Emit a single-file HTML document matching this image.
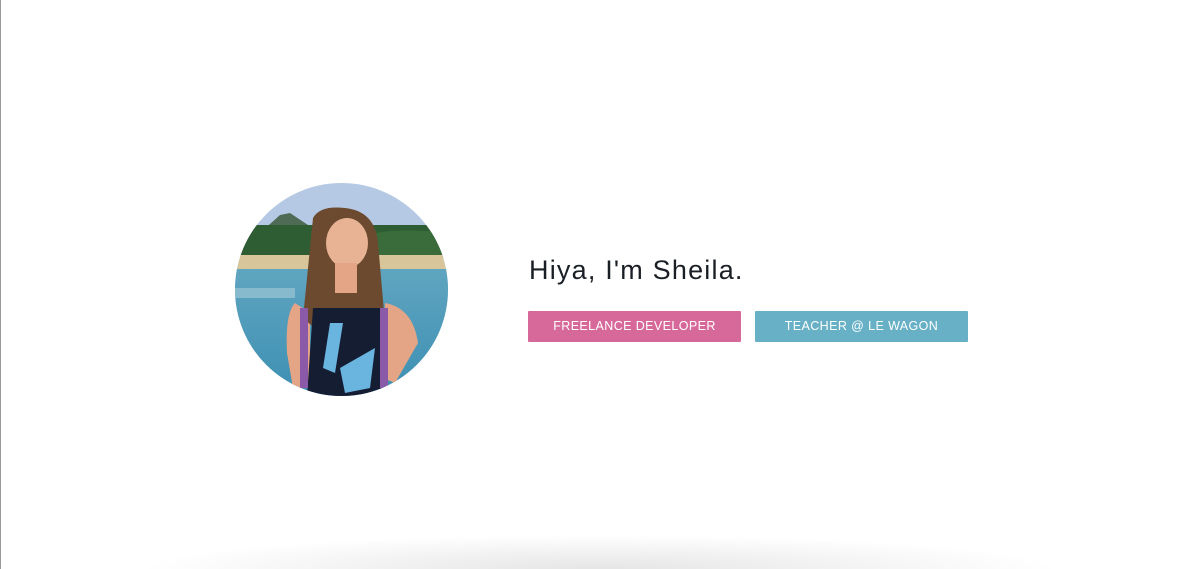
<!DOCTYPE html>
<html><head><style>
html,body{margin:0;padding:0;background:#fff;width:1200px;height:569px;overflow:hidden;position:relative;font-family:"Liberation Sans",sans-serif}
.lb{position:absolute;left:0;top:0;width:1px;height:569px;background:#999}
.shadow{position:absolute;left:140px;top:535px;width:920px;height:34px;background:radial-gradient(ellipse 50% 100% at 50% 100%,rgba(0,0,0,0.10),rgba(0,0,0,0) 100%)}
.photo{position:absolute;left:235px;top:183px;width:213px;height:213px}
h1{position:absolute;left:529px;top:255px;margin:0;font-weight:normal;font-size:27px;color:#1a1f26;letter-spacing:1.2px;white-space:nowrap}
.btn{position:absolute;top:311px;height:31px;width:213px;color:#fff;font-size:12.5px;letter-spacing:0.4px;line-height:31px;text-align:center;border-radius:1px}
</style></head><body>
<div class="lb"></div>
<div class="shadow"></div>
<svg class="photo" viewBox="0 0 213 213">
<defs><clipPath id="c"><circle cx="106.5" cy="106.5" r="106.5"/></clipPath>
<linearGradient id="w" x1="0" y1="0" x2="0" y2="1"><stop offset="0" stop-color="#5fa5c0"/><stop offset="1" stop-color="#3d8fb3"/></linearGradient></defs>
<g clip-path="url(#c)">
<rect width="213" height="213" fill="#b6c9e4"/>
<path d="M25 50 L45 32 L55 30 L70 40 L85 50 Z" fill="#4f6a55"/>
<rect x="0" y="42" width="213" height="33" fill="#2f5d33"/>
<path d="M140 50 Q170 45 213 50 L213 75 L140 75Z" fill="#3a6b3a"/>
<rect x="0" y="72" width="213" height="16" fill="#d9c59a"/>
<rect x="0" y="86" width="213" height="127" fill="url(#w)"/>
<rect x="0" y="105" width="60" height="10" fill="#a9cbd8" opacity="0.6"/>
<path d="M60 120 Q50 130 52 170 L58 205 L75 205 L75 130 Z" fill="#e3a585"/>
<path d="M150 120 Q178 125 183 160 L160 200 L148 195 Z" fill="#e3a585"/>
<path d="M78 35 Q85 22 110 25 Q140 28 143 60 L150 140 L130 150 L85 150 L68 135 Z" fill="#6b4a30"/>
<ellipse cx="112" cy="60" rx="21" ry="25" fill="#e8b394"/>
<rect x="100" y="80" width="22" height="30" fill="#e3a585"/>
<path d="M78 125 L145 125 L152 213 L72 213Z" fill="#151d33"/>
<path d="M95 140 L108 140 L100 190 L88 185Z" fill="#6ab4e0"/>
<path d="M105 185 L140 165 L135 205 L110 210Z" fill="#6ab4e0"/>
<rect x="65" y="125" width="8" height="80" fill="#8a5aa8"/>
<rect x="145" y="125" width="8" height="80" fill="#8a5aa8"/>
</g></svg>
<h1>Hiya, I'm Sheila.</h1>
<div class="btn" style="left:528px;background:#d6699a">FREELANCE DEVELOPER</div>
<div class="btn" style="left:755px;background:#67b0c6">TEACHER @ LE WAGON</div>
</body></html>
